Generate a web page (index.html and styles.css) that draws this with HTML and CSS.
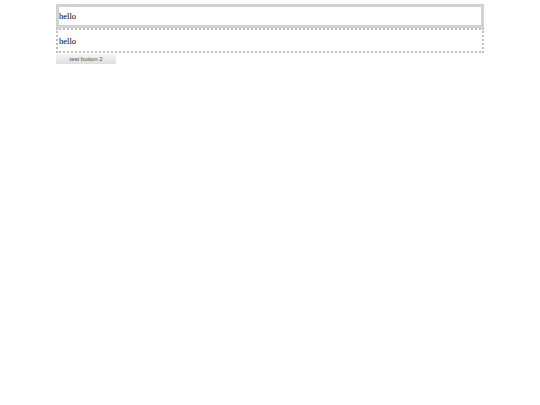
FILE: index.html
```html
<!DOCTYPE html>
<html>
<head>
<meta charset="utf-8">
<link rel="stylesheet" href="styles.css">
</head>
<body>
<div class="wrap">
  <div class="box solid">hello</div>
  <div class="box dashed">hello</div>
  <button class="btn">test button 2</button>
</div>
</body>
</html>
```
FILE: styles.css
```css
html, body { margin: 0; padding: 0; background: #fff; }
.wrap {
  width: 428px;
  margin: 4px auto 0;
  font-family: "Liberation Serif", "Times New Roman", serif;
  font-size: 8.5px;
  color: #000;
}
.box {
  display: flex;
  align-items: center;
  box-sizing: border-box;
}
.solid {
  height: 24px;
  border: 3px solid #d2d2d2;
  padding: 0;
}
.dashed {
  height: 25px;
  border: 2px dotted #bdbdbd;
  padding: 0 1px;
}
.btn {
  display: block;
  width: 60px;
  height: 10px;
  margin: 1px 0 0;
  padding: 0;
  border: none;
  background: linear-gradient(#f5f5f5, #dedede);
  font-family: "Liberation Sans", Arial, sans-serif;
  font-size: 6px;
  color: #555;
  line-height: 10px;
  text-align: center;
}
```
